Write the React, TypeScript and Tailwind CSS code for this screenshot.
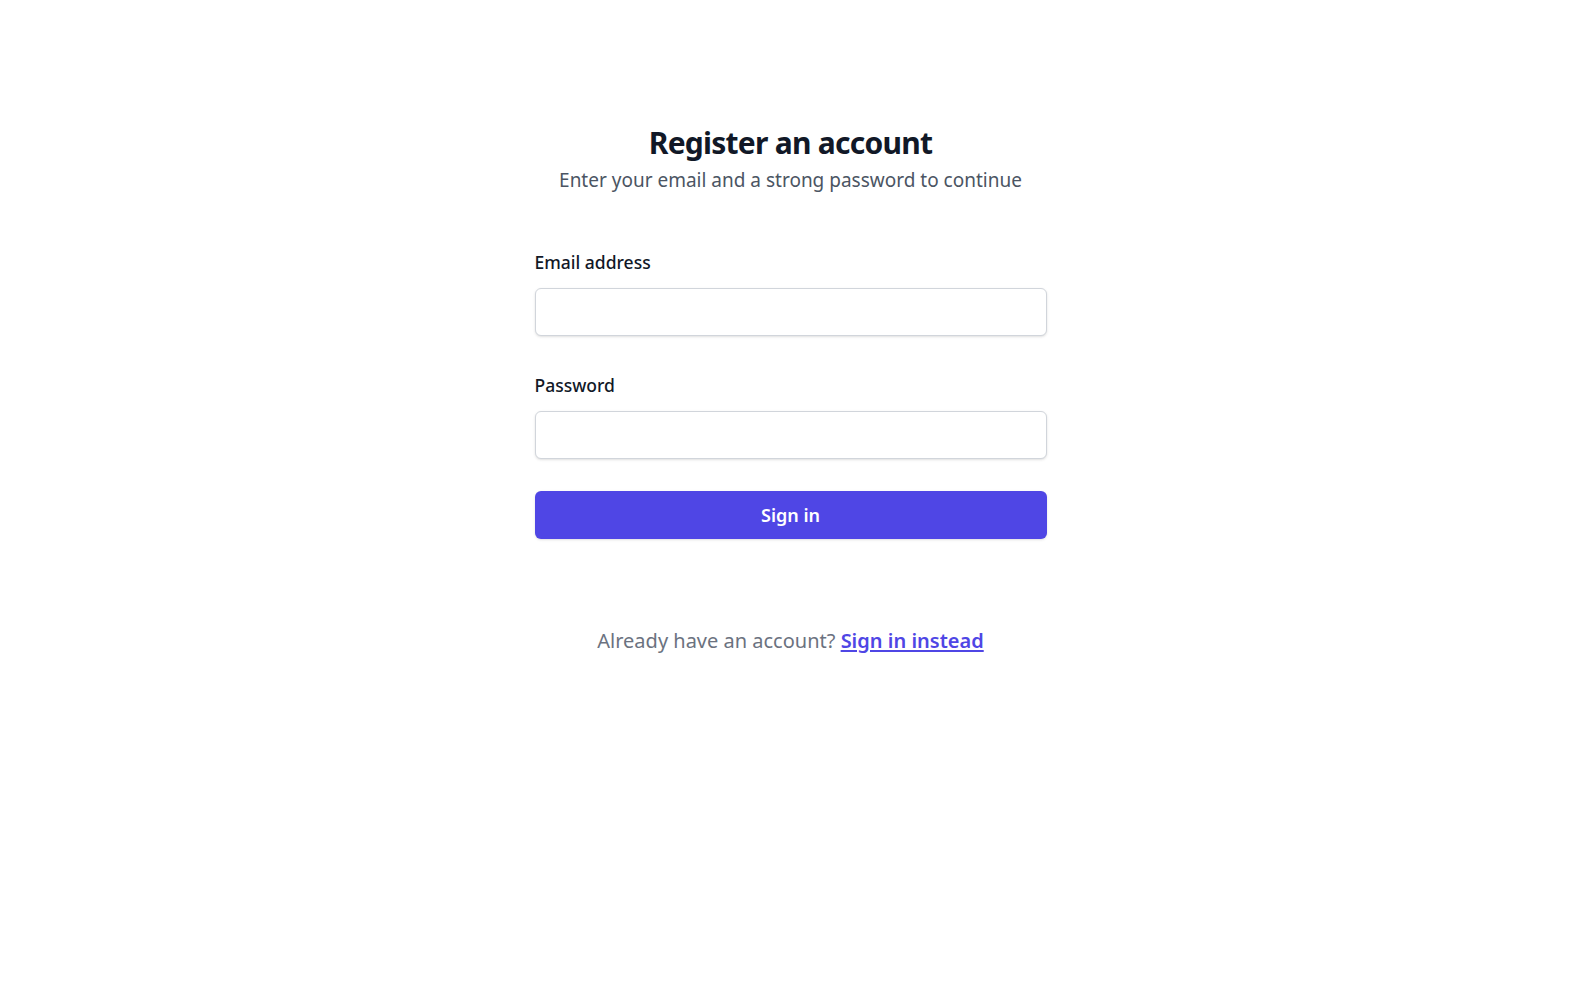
import React from "react";

export default function App() {
  return (
    <div
      className="min-h-screen bg-white flex flex-col items-center px-4 pt-[125px]"
      style={{ fontFamily: '"Noto Sans", "Open Sans", Arial, sans-serif' }}
    >
      <div className="w-full max-w-lg">
        <h2 className="text-center text-3xl leading-9 font-bold text-[#111827] tracking-tight">
          Register an account
        </h2>
        <p className="mt-[5px] text-center text-[19px] leading-7 text-[#4b5563]">
          Enter your email and a strong password to continue
        </p>

        <form className="mt-14" onSubmit={(e) => e.preventDefault()}>
          <label htmlFor="email" className="block text-[17.5px] leading-6 font-medium text-[#111827]">
            Email address
          </label>
          <input
            id="email"
            type="email"
            className="mt-[14px] block w-full h-12 rounded-md border border-[#d1d5db] bg-white px-3 text-base text-[#111827] shadow-sm outline-none"
          />

          <label htmlFor="password" className="mt-[37px] block text-[17.5px] leading-6 font-medium text-[#111827]">
            Password
          </label>
          <input
            id="password"
            type="password"
            className="mt-[14px] block w-full h-12 rounded-md border border-[#d1d5db] bg-white px-3 text-base text-[#111827] shadow-sm outline-none"
          />

          <button
            type="submit"
            className="mt-8 flex w-full h-12 items-center justify-center rounded-md bg-[#4f46e5] text-lg font-semibold text-white shadow-sm"
          >
            Sign in
          </button>
        </form>

        <p className="mt-[88px] text-center text-[20px] leading-7 text-[#6b7280]">
          Already have an account?{" "}
          <a href="#" className="font-semibold text-[#4f46e5] underline underline-offset-2">
            Sign in instead
          </a>
        </p>
      </div>
    </div>
  );
}
